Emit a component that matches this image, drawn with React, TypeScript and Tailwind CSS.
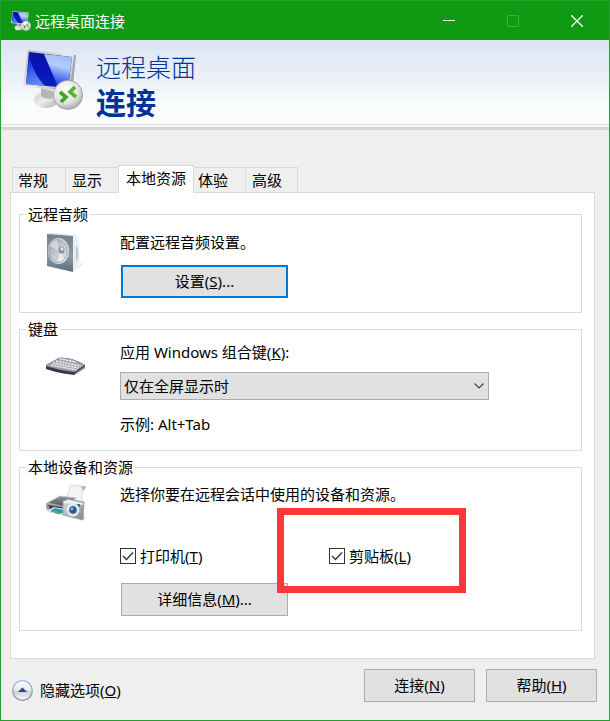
import { useState } from "react";
import type { ReactNode } from "react";
import clsx from "clsx";

type GroupProps = {
  title: string;
  icon: ReactNode;
  style?: string;
  children: ReactNode;
}

type DialogButtonProps = {
  label: string;
  accessKey: string;
  dots?: boolean;
  focused?: boolean;
  style?: string;
}

type CheckFieldProps = {
  id: string;
  label: string;
  accessKey: string;
  checked: boolean;
  onChange: React.ChangeEventHandler<HTMLInputElement>;
  highlight?: boolean;
}

const tabs = [
  { name: "常规", style: "w-[54px] pl-[5px]" },
  { name: "显示", style: "w-[53px] pl-[6px]" },
  { name: "本地资源", style: "w-[76px] pl-[7px]" },
  { name: "体验", style: "w-[52px] pl-1" },
  { name: "高级", style: "w-[52px] pl-[6px]" },
];

const ComputerIcon = ({ id, style }: { id: string; style: string }) => (
  <svg className={style} viewBox="0 0 60 60" aria-hidden="true">
    <defs>
      <linearGradient id={`${id}-screen`} x1="0" y1="0" x2="0" y2="1">
        <stop offset="0" stopColor="#0a12a8" />
        <stop offset="0.5" stopColor="#0714b8" />
        <stop offset="1" stopColor="#0a22c8" />
      </linearGradient>
      <linearGradient id={`${id}-shine`} x1="0.6" y1="0" x2="0.4" y2="1">
        <stop offset="0" stopColor="#9fbcf8" />
        <stop offset="0.35" stopColor="#b4ccfa" />
        <stop offset="0.8" stopColor="#3358e4" />
        <stop offset="1" stopColor="#1230cc" />
      </linearGradient>
      <linearGradient id={`${id}-glow`} x1="0" y1="0" x2="0.3" y2="1">
        <stop offset="0" stopColor="#0a1cc0" />
        <stop offset="0.6" stopColor="#3f66ea" />
        <stop offset="1" stopColor="#5f88f2" />
      </linearGradient>
      <linearGradient id={`${id}-frame`} x1="0" y1="0" x2="1" y2="1">
        <stop offset="0" stopColor="#aeb0b2" />
        <stop offset="0.5" stopColor="#e9eaea" />
        <stop offset="1" stopColor="#9a9c9e" />
      </linearGradient>
      <linearGradient id={`${id}-base`} x1="0" y1="0" x2="1" y2="1">
        <stop offset="0" stopColor="#d0d2d3" />
        <stop offset="0.5" stopColor="#ebecec" />
        <stop offset="1" stopColor="#a9abac" />
      </linearGradient>
      <radialGradient id={`${id}-ball`} cx="0.4" cy="0.3" r="0.75">
        <stop offset="0" stopColor="#ffffff" />
        <stop offset="0.65" stopColor="#e2e2e2" />
        <stop offset="1" stopColor="#a5a5a5" />
      </radialGradient>
    </defs>
    <ellipse cx="23" cy="50" rx="12" ry="8" fill={`url(#${id}-base)`} />
    <path d="M18 38 L30 41 L30 48 C26 50 20 48 18 46 Z" fill="#b4b6b7" />
    <path d="M5 0 L53 5 L49 42 L0 36 Z" fill={`url(#${id}-frame)`} />
    <path d="M51 5 L53 5 L49 42 L47 42 Z" fill="#a2a4a6" />
    <path d="M6 2 L49 7 L45 38 L3 34 Z" fill={`url(#${id}-screen)`} />
    <path d="M6 6 C9 17 14 28 22 36 L3 34 Z" fill={`url(#${id}-glow)`} />
    <path d="M21 4 L49 7 L45 38 L35 37 Z" fill={`url(#${id}-shine)`} />
    <circle cx="45" cy="45" r="15" fill="#a6a8a8" />
    <circle cx="45" cy="45" r="14" fill={`url(#${id}-ball)`} />
    <path d="M37 42 L43 47 L38 52" fill="none" stroke="#3fa51f" strokeWidth="3.6" />
    <path d="M52 37 L47 42 L53 47" fill="none" stroke="#4db82a" strokeWidth="3.6" />
  </svg>
);

const SpeakerIcon = () => (
  <svg className="mt-px w-10 h-10" viewBox="0 0 40 40" aria-hidden="true">
    <defs>
      <linearGradient id="speaker-front" x1="0" y1="0" x2="0" y2="1">
        <stop offset="0" stopColor="#71828c" />
        <stop offset="0.6" stopColor="#8a9aa3" />
        <stop offset="1" stopColor="#5a6d7b" />
      </linearGradient>
      <linearGradient id="speaker-cone" x1="0" y1="0" x2="1" y2="1">
        <stop offset="0" stopColor="#9aa3a9" />
        <stop offset="0.5" stopColor="#c4cacd" />
        <stop offset="1" stopColor="#e4e7e9" />
      </linearGradient>
      <linearGradient id="speaker-side" x1="0" y1="0" x2="1" y2="0">
        <stop offset="0" stopColor="#cfd8e3" />
        <stop offset="1" stopColor="#edf1f6" />
      </linearGradient>
    </defs>
    <path d="M30 35 L38 28 L37 32 L28 39 Z" fill="#ededee" />
    <path d="M1 1 L5 0 L30 2 L33 6 L34 29 L27 39 L26 3 Z" fill="url(#speaker-side)" />
    <path d="M30 12 C33 15 33 25 30 29 Z" fill="#bcc7d8" />
    <path d="M1 1 L27 3 L27 39 L1 33 Z" fill="url(#speaker-front)" />
    <ellipse cx="12.5" cy="18" rx="10.5" ry="13" fill="#dde2e5" />
    <ellipse cx="12" cy="18" rx="9.2" ry="11.5" fill="url(#speaker-cone)" stroke="#8b979f" strokeWidth="0.8" />
    <path d="M13 18 L4 13 C5 10 8 7 11 7 Z" fill="#e6e9eb" opacity="0.6" />
    <path d="M14 18 L18 26 C16 28 14 29 12 29 Z" fill="#fafafa" opacity="0.6" />
    <ellipse cx="15.5" cy="17" rx="3" ry="3.5" fill="#87939b" />
    <ellipse cx="16" cy="16" rx="1.5" ry="1.7" fill="#e9edf0" />
  </svg>
);

const KeyboardIcon = () => (
  <svg className="w-10 h-5" viewBox="0 0 40 20" aria-hidden="true">
    <path d="M0 8 L13 1 C22 0 30 3 39 8 L39 11 L28 18 C19 17 8 15 0 12 Z" fill="#353a45" />
    <path d="M0 8 L13 1 C22 0 30 3 39 8 L28 15 C19 14 9 12 0 9 Z" fill="#9a9fa5" />
    <path d="M5 8 L31 13 M7 6 L33 11 M10 4 L35 9 M14 2 L30 5" fill="none" stroke="#eceeef" strokeWidth="1.6" strokeDasharray="2.4 0.7" />
    <path d="M29 17 L39 10" fill="none" stroke="#8e9ab4" strokeWidth="1.4" />
  </svg>
);

const DevicesIcon = () => (
  <svg className="mt-px w-10 h-9" viewBox="0 0 40 36" aria-hidden="true">
    <defs>
      <linearGradient id="camera-body" x1="0" y1="0" x2="1" y2="1">
        <stop offset="0" stopColor="#dfe3e6" />
        <stop offset="0.5" stopColor="#aab2b9" />
        <stop offset="1" stopColor="#7b858e" />
      </linearGradient>
      <linearGradient id="printer-body" x1="0" y1="0" x2="0" y2="1">
        <stop offset="0" stopColor="#8f969c" />
        <stop offset="1" stopColor="#4b535a" />
      </linearGradient>
    </defs>
    <path d="M24 0 L40 2 C36 6 35 10 36 17 L19 14 C22 9 24 5 24 0 Z" fill="#f3f4f5" stroke="#c9ccd0" strokeWidth="0.7" />
    <path d="M35 1 L40 2 L37 6 Z" fill="#a9aeb3" />
    <path d="M1 18 L14 11 L30 13 L20 22 Z" fill="url(#printer-body)" stroke="#c3c8cc" strokeWidth="0.8" />
    <path d="M0 18 L17 21 L18 30 L3 27 L0 23 Z" fill="#9aa1a7" />
    <path d="M2 20 L16 22 L16 26 L4 24 Z" fill="#3b4248" />
    <path d="M1 26 L8 22 L18 24 L18 29 L13 30 Z" fill="#e6edf1" />
    <path d="M4 26 L9 23 L17 25 L17 28 L12 29 Z" fill="#2b91c5" />
    <path d="M6 26 L10 25 L14 28 L12 29 Z" fill="#54ae5c" />
    <path d="M35 34 L40 31 L40 33 L36 36 Z" fill="#dfe1e3" />
    <path d="M17 16 L22 14 L38 17 L37 35 L17 30 Z" fill="url(#camera-body)" stroke="#8d969e" strokeWidth="0.7" />
    <path d="M18 17 L22 15 L37 18 L37 20 L18 18 Z" fill="#eef0f2" />
    <path d="M31 19 L34 19 L34 22 L31 22 Z" fill="#2c70c2" />
    <circle cx="27" cy="25" r="6.4" fill="#eef1f3" />
    <circle cx="27" cy="25" r="4.4" fill="#8796a5" />
    <circle cx="27" cy="25" r="3.2" fill="#1f58a6" />
    <circle cx="26" cy="24" r="1.2" fill="#9fd0f6" />
  </svg>
);

const Group = ({ title, icon, style, children }: GroupProps) => (
  <fieldset className="min-w-0 border border-[#dcdcdc]">
    <legend className="ml-[6px] px-[2px] leading-5">{title}</legend>
    <div className={clsx("flex items-start gap-[34px] pl-[26px]", style)}>
      {icon}
      <div className="flex min-w-0 flex-1 flex-col items-start">{children}</div>
    </div>
  </fieldset>
);

const DialogButton = ({ label, accessKey, dots, focused, style }: DialogButtonProps) => (
  <button
    type="button"
    className={clsx(
      "h-[33px] bg-[#e1e1e1] pb-[2px] text-center leading-5",
      focused ? "border-2 border-[#0078d7]" : "border border-[#adadad]",
      style
    )}
  >
    {label}(<u>{accessKey}</u>){dots && "..."}
  </button>
);

const CheckField = ({ id, label, accessKey, checked, onChange, highlight }: CheckFieldProps) => (
  <label htmlFor={id} className="relative flex items-center gap-1 leading-5">
    <span className="relative block h-4 w-4">
      <input
        id={id}
        type="checkbox"
        checked={checked}
        onChange={onChange}
        className="peer block h-4 w-4 appearance-none border border-[#333333] bg-white"
      />
      <svg className="pointer-events-none absolute inset-0 hidden h-4 w-4 peer-checked:block" viewBox="0 0 16 16" aria-hidden="true">
        <path d="M3 8 L6.5 11.5 L13 4.5" fill="none" stroke="#333333" strokeWidth="1.4" />
      </svg>
    </span>
    <span>{label}(<u>{accessKey}</u>)</span>
    {highlight && (
      <span className="pointer-events-none absolute -left-[52px] -top-[38px] h-[85px] w-[189px] border-7 border-[#fd3636]" />
    )}
  </label>
);

const App = () => {

  const [activeTab, setActiveTab] = useState<string>("本地资源");
  const [printer, setPrinter] = useState<boolean>(true);
  const [clipboard, setClipboard] = useState<boolean>(true);

  return (
    <div className="min-h-screen border border-[#22a02c] bg-[#efefef] font-['Noto_Sans','Noto_Sans_CJK_SC',sans-serif] text-[15px] leading-5 text-black">
      <header className="flex h-[39px] items-center bg-[#109a14] pl-[10px] text-white">
        <ComputerIcon id="small" style="h-5 w-5" />
        <h1 className="ml-1 flex-1">远程桌面连接</h1>
        <button type="button" aria-label="最小化" className="flex h-full w-16 items-center justify-center">
          <svg className="h-3 w-3" viewBox="0 0 12 12"><path d="M0 5.5 H12" stroke="white" /></svg>
        </button>
        <button type="button" aria-label="最大化" disabled className="flex h-full w-16 items-center justify-center">
          <svg className="h-3 w-3" viewBox="0 0 12 12"><path d="M0.5 0.5 H11.5 V11.5 H0.5 Z" fill="none" stroke="#3fae43" /></svg>
        </button>
        <button type="button" aria-label="关闭" className="flex h-full w-16 items-center justify-center">
          <svg className="h-3 w-3" viewBox="0 0 12 12"><path d="M0 0 L12 12 M12 0 L0 12" stroke="white" strokeWidth="1.3" /></svg>
        </button>
      </header>

      <div className="flex h-[84px] items-start gap-[13px] bg-linear-to-b from-[#dae6f2] via-[#e9eef8] via-40% to-[#fbfdfd] to-80% pl-[22px] pt-[10px]">
        <ComputerIcon id="large" style="h-[60px] w-[60px]" />
        <div className="text-[#003399]">
          <p className="text-[25px] font-light leading-[34px]">远程桌面</p>
          <p className="text-[30px] font-bold leading-[38px]">连接</p>
        </div>
      </div>
      <div className="h-[6px] border-b-3 border-t border-b-[#d5d5d5] border-t-[#dcdfe4] bg-[#f7f7f7]" />

      <main className="pb-[18px] pl-[9px] pr-[14px] pt-[35px]">
        <div role="tablist" className="flex items-end pl-px">
          {tabs.map((tab, index) => (
            <button
              key={tab.name}
              type="button"
              role="tab"
              aria-selected={activeTab === tab.name}
              onClick={() => setActiveTab(tab.name)}
              className={clsx(
                "border-t border-r border-[#d9d9d9] text-left",
                index === 0 && "ml-px border-l",
                activeTab === tab.name
                  ? "relative -mb-px -ml-px h-[28px] border-l bg-white pb-1"
                  : "h-[25px]",
                tab.style
              )}
            >
              {tab.name}
            </button>
          ))}
        </div>

        <section className="flex flex-col gap-[6px] border border-[#d9d9d9] bg-white pb-[27px] pl-2 pr-3 pt-[11px]">
          <Group title="远程音频" icon={<SpeakerIcon />} style="pt-2 pb-[14px]">
            <p>配置远程音频设置。</p>
            <DialogButton label="设置" accessKey="S" dots focused style="ml-px mt-[13px] w-[167px]" />
          </Group>

          <Group title="键盘" icon={<div className="pt-[15px]"><KeyboardIcon /></div>} style="pt-[3px] pb-4">
            <label htmlFor="shortcuts">应用 Windows 组合键(<u>K</u>):</label>
            <div className="relative mt-[10px] w-full max-w-[369px]">
              <select id="shortcuts" className="block h-7 w-full appearance-none border border-[#adadad] bg-[#e1e1e1] pl-[3px]">
                <option>仅在全屏显示时</option>
                <option>在这台计算机上</option>
                <option>在远程计算机上</option>
              </select>
              <svg className="pointer-events-none absolute right-[5px] top-[11px] h-[6px] w-[10px]" viewBox="0 0 10 6" aria-hidden="true">
                <path d="M0.5 0.5 L5 5 L9.5 0.5" fill="none" stroke="#444444" strokeWidth="1.2" />
              </svg>
            </div>
            <p className="mt-[14px]">示例: Alt+Tab</p>
          </Group>

          <Group title="本地设备和资源" icon={<DevicesIcon />} style="pt-[7px] pb-[14px]">
            <p>选择你要在远程会话中使用的设备和资源。</p>
            <div className="relative z-10 mt-[42px] grid w-full grid-cols-[209px_auto] justify-start">
              <CheckField id="printer" label="打印机" accessKey="T" checked={printer} onChange={(e) => setPrinter(e.target.checked)} />
              <CheckField id="clipboard" label="剪贴板" accessKey="L" checked={clipboard} onChange={(e) => setClipboard(e.target.checked)} highlight />
            </div>
            <DialogButton label="详细信息" accessKey="M" dots style="ml-px mt-[17px] w-[167px]" />
          </Group>
        </section>

        <footer className="flex items-center pt-[10px]">
          <button type="button" className="flex items-center gap-[7px] pl-[2px] pt-[9px]">
            <svg className="h-[21px] w-[21px]" viewBox="0 0 21 21" aria-hidden="true">
              <defs>
                <linearGradient id="toggle-fill" x1="0" y1="0" x2="0" y2="1">
                  <stop offset="0" stopColor="#ffffff" />
                  <stop offset="0.45" stopColor="#e9ecea" />
                  <stop offset="0.55" stopColor="#cdd4d0" />
                  <stop offset="1" stopColor="#f6f8f8" />
                </linearGradient>
                <linearGradient id="toggle-ring" x1="0" y1="0" x2="0" y2="1">
                  <stop offset="0" stopColor="#a9b4ea" />
                  <stop offset="1" stopColor="#8490ab" />
                </linearGradient>
              </defs>
              <circle cx="10.5" cy="10.5" r="9.8" fill="url(#toggle-fill)" stroke="url(#toggle-ring)" strokeWidth="1.3" />
              <path d="M6 12 L10.5 7.5 L15 12 Z" fill="#24419f" />
            </svg>
            <span>隐藏选项(<u>O</u>)</span>
          </button>
          <div className="-mr-[2px] ml-auto flex gap-[11px]">
            <DialogButton label="连接" accessKey="N" style="w-[111px]" />
            <DialogButton label="帮助" accessKey="H" style="w-[111px]" />
          </div>
        </footer>
      </main>
    </div>
  )
}

export default App;
